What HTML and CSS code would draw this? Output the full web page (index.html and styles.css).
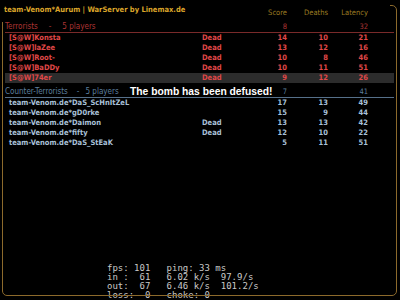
FILE: index.html
```html
<!DOCTYPE html>
<html>
<head>
<meta charset="utf-8">
<link rel="stylesheet" href="styles.css">
</head>
<body>
<div class="frame">
  <div class="row head">
    <div class="title">team-Venom*Aurum | WarServer by Linemax.de</div>
    <div class="num hcell">Score</div>
    <div class="num hcell">Deaths</div>
    <div class="num hcell">Latency</div>
  </div>

  <div class="team t">
    <div class="row teamrow">
      <div class="tname">Terrorists<span class="dash">-</span><span class="count">5 players</span></div>
      <div></div>
      <div class="num">8</div>
      <div class="num"></div>
      <div class="num">32</div>
    </div>
    <div class="row player"><div class="pname">[S@W]Konsta</div><div>Dead</div><div class="num">14</div><div class="num">10</div><div class="num">21</div></div>
    <div class="row player"><div class="pname">[S@W]laZee</div><div>Dead</div><div class="num">13</div><div class="num">12</div><div class="num">16</div></div>
    <div class="row player"><div class="pname">[S@W]Root-</div><div>Dead</div><div class="num">10</div><div class="num">8</div><div class="num">46</div></div>
    <div class="row player"><div class="pname">[S@W]BaDDy</div><div>Dead</div><div class="num">10</div><div class="num">11</div><div class="num">51</div></div>
    <div class="row player me"><div class="pname">[S@W]74er</div><div>Dead</div><div class="num">9</div><div class="num">12</div><div class="num">26</div></div>
  </div>

  <div class="team ct">
    <div class="row teamrow">
      <div class="tname">Counter-Terrorists<span class="dash">-</span><span class="count">5 players</span></div>
      <div></div>
      <div class="num">7</div>
      <div class="num"></div>
      <div class="num">41</div>
    </div>
    <div class="row player"><div class="pname">team-Venom.de*DaS_ScHnItZeL</div><div></div><div class="num">17</div><div class="num">13</div><div class="num">49</div></div>
    <div class="row player"><div class="pname">team-Venom.de*gD0rke</div><div></div><div class="num">15</div><div class="num">9</div><div class="num">44</div></div>
    <div class="row player"><div class="pname">team-Venom.de*Daimon</div><div>Dead</div><div class="num">13</div><div class="num">13</div><div class="num">42</div></div>
    <div class="row player"><div class="pname">team-Venom.de*fifty</div><div>Dead</div><div class="num">12</div><div class="num">10</div><div class="num">22</div></div>
    <div class="row player"><div class="pname">team-Venom.de*DaS_StEaK</div><div></div><div class="num">5</div><div class="num">11</div><div class="num">51</div></div>
  </div>
</div>

<div class="bomb">The bomb has been defused!</div>

<pre class="netgraph">fps: 101   ping: 33 ms
in :  61   6.02 k/s  97.9/s
out:  67   6.46 k/s  101.2/s
loss:  0   choke: 0</pre>
</body>
</html>
```

FILE: styles.css
```css
html, body {
  margin: 0;
  padding: 0;
  background: #000;
  width: 400px;
  height: 300px;
  overflow: hidden;
}

body {
  position: relative;
  font-family: "DejaVu Sans Condensed", "DejaVu Sans", Verdana, sans-serif;
  font-stretch: condensed;
  font-size: 7.5px;
}

.frame {
  position: relative;
  z-index: 1;
  margin: 5px 0 0 2px;
  width: 395px;
  height: 291px;
  border: 1px solid #8c6a2c;
  border-radius: 5px;
  padding: 0 0 0 2px;
  box-sizing: border-box;
}

.row {
  display: grid;
  grid-template-columns: 197px 45px 40px 41px 40px 1fr;
  height: 10px;
  line-height: 10px;
  white-space: pre;
  margin-right: 2px;
}

.num { text-align: right; }

.head {
  height: 17px;
  margin-top: -1px;
}

.title {
  grid-column: 1 / 3;
  color: #dba52a;
  font-weight: bold;
  background: #000;
  margin-left: -3px;
  padding-left: 2px;
  margin-right: -143px;
}

.hcell {
  color: #9c7d22;
  padding-top: 3px;
}

.team.ct { margin-top: 4px; }

.teamrow {
  border-bottom: 1px solid;
}

.tname { font-size: 8px; }
.t .dash { margin-left: 11px; }
.t .count { margin-left: 11px; }
.ct .dash { margin-left: 9px; }
.ct .count { margin-left: 6px; }

.pname {
  padding-left: 4px;
}

.player div { font-weight: bold; }

.t .teamrow { color: #ad3434; border-color: #7a2a2a; }
.t .player { color: #e04848; }
.me { background: #2c2c2c; }

.ct .teamrow { color: #5d7f9e; border-color: #56708a; }
.ct .player { color: #a9c1d8; }

.bomb {
  position: absolute;
  z-index: 2;
  left: 130px;
  top: 86px;
  color: #fff;
  font-family: "Liberation Sans", Arial, sans-serif;
  font-stretch: normal;
  font-weight: bold;
  font-size: 10.3px;
  line-height: 12px;
}

.netgraph {
  position: absolute;
  left: 107px;
  top: 264px;
  margin: 0;
  font-family: "DejaVu Sans Mono", monospace;
  font-stretch: normal;
  font-size: 9px;
  line-height: 9px;
  color: #c8c8c8;
}
```
